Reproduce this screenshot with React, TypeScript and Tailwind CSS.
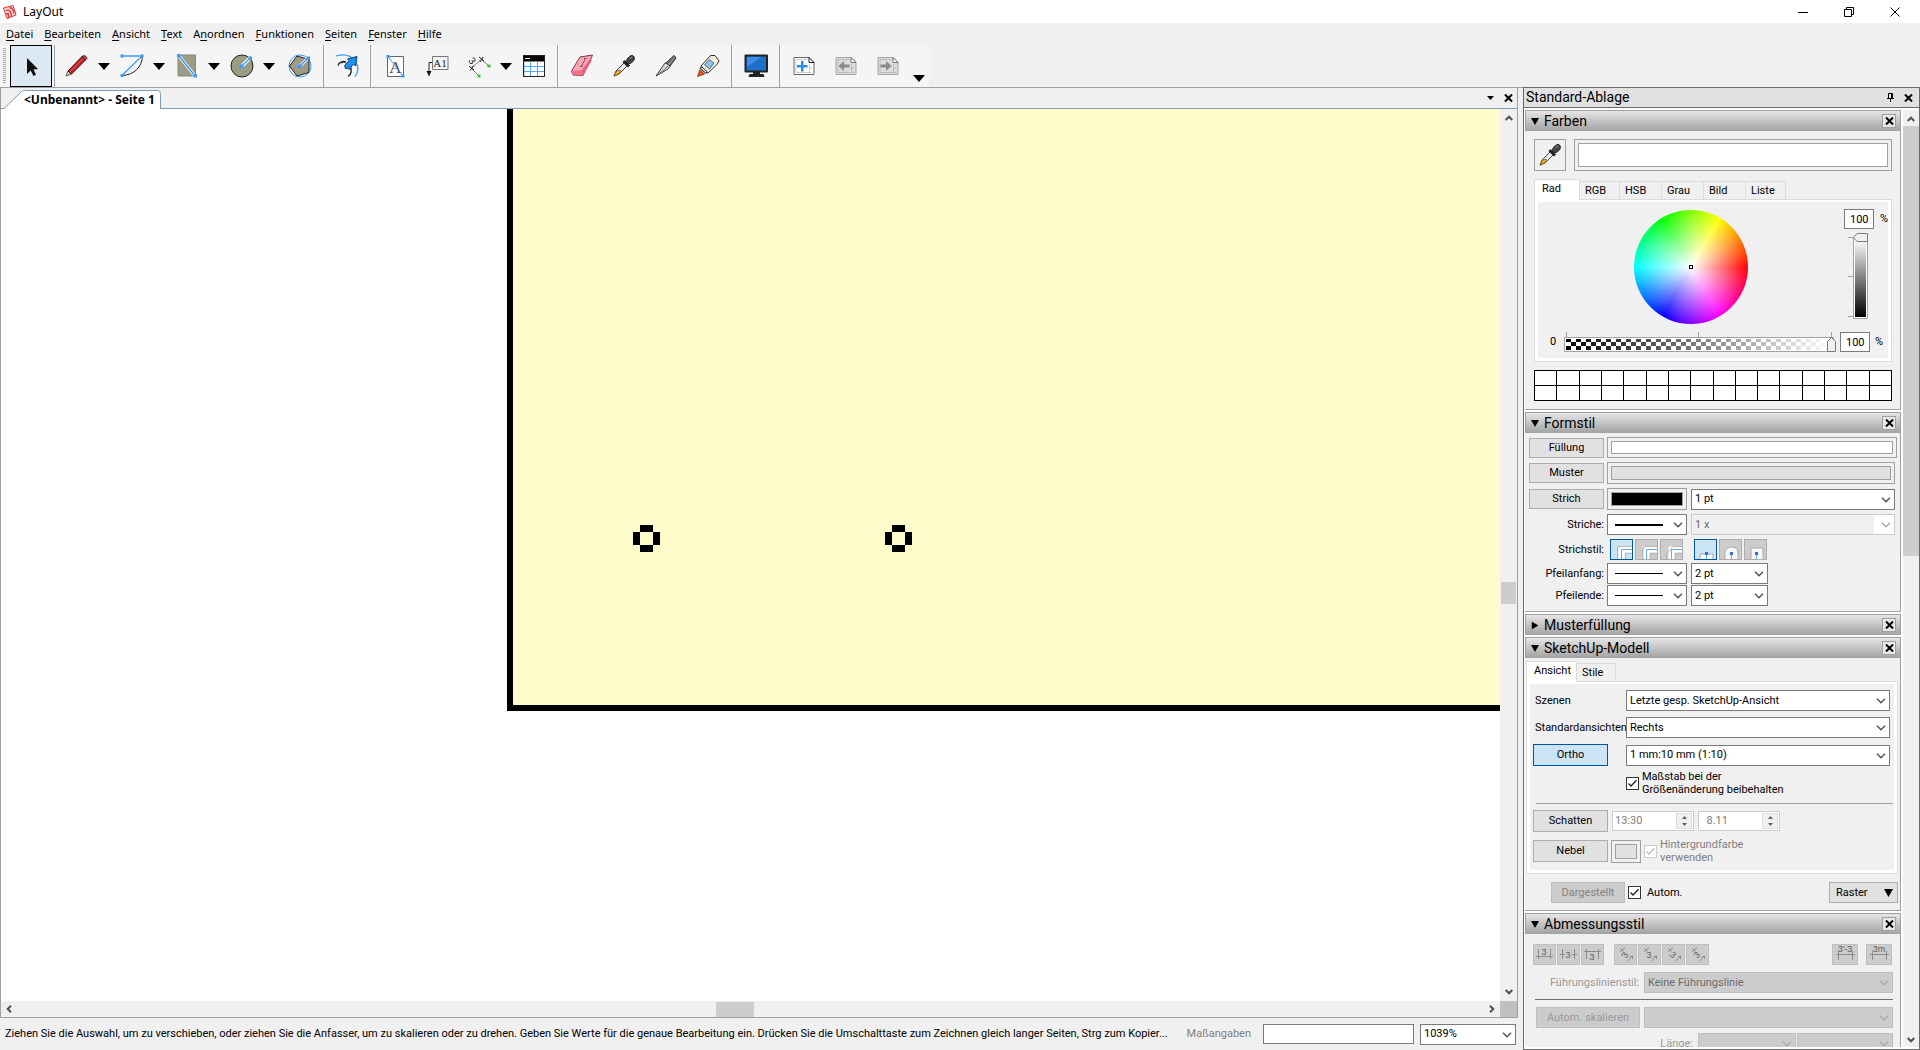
import { type ReactNode } from "react";
import clsx from "clsx";

const MENU = ["Datei", "Bearbeiten", "Ansicht", "Text", "Anordnen", "Funktionen", "Seiten", "Fenster", "Hilfe"];
const MENU_KEY = [0, 0, 0, 0, 1, 0, 0, 0, 0];

/* ---------- small ui parts ---------- */

const Chevron = ({ className = "" }: { className?: string }) => (
    <svg viewBox="0 0 10 6" className={clsx("w-2.5 h-1.5", className)} fill="none" stroke="currentColor">
        <path d="M1 .8 5 4.8 9 .8" strokeWidth="1.4" />
    </svg>
);

const ScrollArrow = ({ className = "" }: { className?: string }) => (
    <svg viewBox="0 0 8 6" className={clsx("w-2 h-1.5 text-[#505050]", className)} fill="none" stroke="currentColor">
        <path d="M.7 5 4 1.7 7.3 5" strokeWidth="2" />
    </svg>
);

const Triangle = ({ className = "w-3 h-[7px]" }: { className?: string }) => (
    <svg viewBox="0 0 12 7" preserveAspectRatio="none" className={clsx("shrink-0", className)} fill="currentColor">
        <path d="M0 0H12L6 7Z" />
    </svg>
);

const Cross = ({ className = "" }: { className?: string }) => (
    <svg viewBox="0 0 9 8" className={clsx("w-[9px] h-2", className)} fill="none" stroke="currentColor">
        <path d="M1 .5 8 7.5M8 .5 1 7.5" strokeWidth="2" />
    </svg>
);

type SelectProps = {
    label: string;
    value?: string;
    className?: string;
    variant?: "normal" | "disabled" | "gray";
    line?: string;
    id?: string;
};

const Select = ({ label, value = "", className = "", variant = "normal", line, id }: SelectProps) => (
    <div className={clsx("relative h-[21px]", className)}>
        <select
            id={id}
            aria-label={label}
            defaultValue={value}
            disabled={variant !== "normal"}
            className={clsx("appearance-none w-full h-full border pl-[3px] pr-5 opacity-100 outline-none", {
                "border-[#7a7a7a] bg-white text-black": variant === "normal",
                "border-[#cccccc] bg-[#f0f0f0] text-[#6d6d6d]": variant === "disabled",
                "border-[#bfbfbf] bg-[#cccccc] text-[#6d6d6d]": variant === "gray",
            })}
        >
            <option value={value}>{value}</option>
        </select>
        {variant === "disabled" && (
            <span className="absolute inset-y-px right-px w-5 bg-white pointer-events-none" />
        )}
        {line && <span className={clsx("absolute left-2 right-6 top-2.5 bg-black pointer-events-none", line)} />}
        <Chevron
            className={clsx(
                "absolute right-1 top-2 pointer-events-none",
                variant === "normal" ? "text-[#505050]" : "text-[#aaaaaa]"
            )}
        />
    </div>
);

const PanelButton = ({ children, className = "" }: { children: ReactNode; className?: string }) => (
    <button className={clsx("border border-[#adadad] bg-[#e1e1e1] text-center shrink-0", className)}>{children}</button>
);

const Well = ({ className = "", fill = "bg-white" }: { className?: string; fill?: string }) => (
    <div className={clsx("border border-[#a0a0a0] p-[3px]", className)}>
        <div className={clsx("h-full border border-[#a0a0a0]", fill)} />
    </div>
);

const Check = ({ id, disabled }: { id: string; disabled?: boolean }) => (
    <span className="relative size-[13px] shrink-0">
        <input
            id={id}
            type="checkbox"
            defaultChecked
            disabled={disabled}
            className={clsx("appearance-none block size-full border bg-white", disabled ? "border-[#cccccc]" : "border-[#333]")}
        />
        <svg
            viewBox="0 0 13 13"
            className={clsx("absolute inset-0 pointer-events-none", disabled ? "text-[#bbb]" : "text-[#222]")}
            fill="none"
            stroke="currentColor"
        >
            <path d="M2.5 6.5 5 9 10.5 3.3" strokeWidth="1.3" />
        </svg>
    </span>
);

type SectionProps = { title: string; open?: boolean; className?: string; children?: ReactNode };

const Section = ({ title, open = true, className = "", children }: SectionProps) => (
    <section className={clsx("border-r border-[#a0a0a0] shadow-[0_2px_0_#fff] mb-0.5 shrink-0", open && "border-b", className)}>
        <div className="h-[21px] border-t border-l border-[#a0a0a0] bg-linear-to-b from-[#e6e6e6] to-[#a2a2a2] flex items-center pl-[5px] pr-1">
            <Triangle className={clsx("w-2 h-[7px]", !open && "-rotate-90")} />
            <h2 className="ml-[5px] text-sm leading-[18px] pb-px flex-1">{title}</h2>
            <button aria-label={title + " schließen"} className="size-3.5 border border-[#a0a0a0] bg-[#e8e8e8] flex items-center justify-center">
                <Cross />
            </button>
        </div>
        {children}
    </section>
);

type TabsProps = { tabs: string[]; widths: string[]; children: ReactNode };

const Tabs = ({ tabs, widths, children }: TabsProps) => (
    <div>
        <div className="flex items-end relative h-[21px] -mb-px" role="tablist">
            {tabs.map((tab, i) => (
                <button
                    key={tab}
                    role="tab"
                    aria-selected={i === 0}
                    className={clsx("border-t border-r border-[#dcdcdc] text-left", widths[i], {
                        "h-[21px] bg-white border-l pl-[7px] pb-0.5": i === 0,
                        "h-[19px] border-b pl-[5px]": i !== 0,
                    })}
                >
                    {tab}
                </button>
            ))}
        </div>
        <div className="border border-[#dcdcdc] bg-white p-[3px] pt-0.5">
            <div className="bg-[#f0f0f0]">{children}</div>
        </div>
    </div>
);

/* ---------- toolbar ---------- */

const Icon = ({ children }: { children: ReactNode }) => (
    <svg viewBox="0 0 24 24" className="size-6" fill="none">
        {children}
    </svg>
);

const BLUE = "#3c9bf5";

const EyedropperIcon = () => (
    <Icon>
        <path d="M2 22 4 17 13 8 16 11 7 20Z" fill="#e8e8e8" stroke="#444" />
        <path d="M2 22 4 17.500 8 16 9 17.500 6.500 20Z" fill="#f5b020" stroke="#6b4a10" strokeWidth=".7" />
        <path d="M11.500 7 17 12.500" stroke="#222" strokeWidth="3" />
        <path d="M14 8C15 4 18 1.500 20 1.500S23 4 22 6 18 10 16 10Z" fill="#4a4646" stroke="#222" />
        <path d="M18 4.500 20 3" stroke="#999" />
    </Icon>
);

const icons: Record<string, ReactNode> = {
    Auswahl: (
        <Icon>
            <path d="M8 4V20L11.700 16.500 14.500 22 17 20.700 14.500 15.500 19 15Z" fill="#111" />
        </Icon>
    ),
    Linie: (
        <Icon>
            <path d="M1 22 3 17 6.500 20Z" fill="#e9d6a0" stroke="#333" strokeWidth=".8" />
            <path d="M3 17 17 2.500 20.500 6 6.500 20Z" fill="#c81e28" stroke="#3a1010" />
            <path d="M5 18 18.500 4" stroke="#f06068" />
            <path d="M17 2.500C19 .5 23 3 21.500 5L20.500 6Z" fill="#b06068" stroke="#3a1010" />
        </Icon>
    ),
    Bogen: (
        <Icon>
            <path d="M22.500 2C22 13 14 21 2.500 21.500" stroke="#222" />
            <path d="M2 2H22L2 21.500" stroke={BLUE} strokeWidth="1.300" />
            <path d="M.5.5h3v3h-3zM20.500.5h3v3h-3zM.5 20h3v3h-3z" fill={BLUE} />
        </Icon>
    ),
    Rechteck: (
        <Icon>
            <path d="M3 1H20.500V22H3Z" fill="#9e9b84" stroke="#8a8772" />
            <path d="M4 2 20 22" stroke="#fff" strokeWidth="3" />
            <path d="M4 2 20 22" stroke={BLUE} strokeWidth="1.500" />
            <path d="M2 0h3.500v3.500H2zM18.500 20H22v3.500h-3.500z" fill={BLUE} />
        </Icon>
    ),
    Kreis: (
        <Icon>
            <circle cx="12" cy="12" r="11" fill="#9e9b84" stroke="#222" />
            <path d="M12 12 20 4" stroke="#fff" strokeWidth="3.500" />
            <path d="M12 12 20 4" stroke={BLUE} strokeWidth="1.500" />
            <path d="M10 10.500h3.500V14H10zM18.500 2.500H22V6h-3.500z" fill={BLUE} />
        </Icon>
    ),
    Polygon: (
        <Icon>
            <circle cx="12" cy="12" r="11" stroke={BLUE} />
            <path d="M9 2 21 5.500V18.500L9 22 1.500 12Z" fill="#9e9b84" stroke="#222" />
            <path d="M12 12 20 4" stroke="#fff" strokeWidth="3" />
            <path d="M12 12 20 4" stroke={BLUE} strokeWidth="1.500" />
            <path d="M10 10.500h3.500V14H10zM18.500 2.500H22V6h-3.500z" fill={BLUE} />
        </Icon>
    ),
    Versatz: (
        <Icon>
            <path d="M1 2C9-.5 16 1.500 20 7 24 12.500 23.500 18 20 22.500" stroke={BLUE} strokeWidth="1.300" />
            <path d="M3 11.500C4 8 8 6.500 11 8M15 12.500C17.500 16 16 21 13 22.500" stroke="#222" strokeWidth="1.300" />
            <path d="M6 9.500C8 7.500 11 8.500 12 10" stroke="#222" />
            <path d="M9.500 12 14 6.500 12.500 5 22 2.500 20.500 12 18.500 10 14 15.500 12.500 14 11 15Z" fill="#1e90f0" stroke="#0a3f73" />
        </Icon>
    ),
    Text: (
        <Icon>
            <path d="M4.500 2.500H20.500V22.500H4.500Z" fill="#fff" stroke="#666" />
            <text x="12.500" y="19" fontSize="17" textAnchor="middle" fill="#444" fontFamily="Liberation Serif, serif">A</text>
            <path d="M5 2.500 20 22" stroke={BLUE} />
            <path d="M3.500 1h3v3h-3zM18.500 20.500h3v3h-3z" fill={BLUE} />
        </Icon>
    ),
    Beschriftung: (
        <Icon>
            <path d="M7.500 2.500H23V15.500H7.500Z" fill="#f4f4f4" stroke="#777" />
            <text x="15" y="13" fontSize="11" textAnchor="middle" fill="#222" fontFamily="Liberation Serif, serif">A1</text>
            <path d="M7 8.500H4V18" stroke="#222" />
            <path d="M1.500 17H6.500L4 22.500Z" fill="#111" />
        </Icon>
    ),
    Bemaßung: (
        <Icon>
            <path d="M5 14 14.500 5" stroke="#555" strokeDasharray="2 1" />
            <path d="M14 5 22 12M4 14 12 22" stroke="#777" />
            <path d="M12 3 17 7M16 3 13 8M2 12 7 16M6.500 11.500 3 16.500" stroke="#222" />
            <text x="2" y="10" fontSize="10" fill="#222" transform="rotate(50 5 7)" fontFamily="Liberation Sans, sans-serif">3</text>
            <path d="M20.500 10.500h3v3h-3zM10.500 20.500h3v3h-3z" fill="#3fc43f" />
        </Icon>
    ),
    Tabelle: (
        <Icon>
            <path d="M1.500 1.500H22.500V22.500H1.500Z" fill="#fff" stroke="#222" />
            <path d="M2 8V22.500M8.500 8V22M15.500 8V22M2 12.500H22M2 17.500H22" stroke="#5aa7f5" />
            <path d="M1 1H23V7.500H1Z" fill="#000" />
            <path d="M3 4.500H8" stroke="#fff" />
            <path d="M1.500 1.500H22.500V22.500H1.500Z" stroke="#222" />
        </Icon>
    ),
    Radiergummi: (
        <Icon>
            <path d="M1.500 17 10 3 22.500 1 13 21.500 3 21Z" fill="#f7a8b8" stroke="#7a3a48" />
            <path d="M1.500 17 12 16 13 21.500 3 21Z" fill="#f56f88" />
            <path d="M12 16 22.500 1.500 21 8 13 21.500Z" fill="#e8607c" />
            <path d="M11.500 12 15.500 4.500M10 12.500H13M14 4.500H16.500" stroke="#a04458" />
        </Icon>
    ),
    Pipette: <EyedropperIcon />,
    Teilen: (
        <Icon>
            <path d="M2 22 11 9 14 8 17 11 14 15Z" fill="#dcdcdc" stroke="#333" />
            <path d="M12 9 20 1.500 22 4 16 12Z" fill="#888" stroke="#222" />
            <path d="M5 20 14 12M14 9 19 4" stroke="#666" />
        </Icon>
    ),
    Verbinden: (
        <Icon>
            <path d="M5 12 14.500 1.500 19 1.500 23 7 21 10.500 12 19 7 17Z" fill="#f2eedf" stroke="#333" />
            <path d="M8.500 11 13 5.500 18 9 13.500 15Z" fill="#8cc4ec" stroke="#456" strokeWidth=".8" />
            <path d="M4 14 6 13 11 17.500 10 19.500Z" fill="#ddd" stroke="#333" />
            <path d="M1.500 22.500 4 15.500 8.500 20Z" fill="#e8501e" stroke="#8a2a0a" strokeWidth=".8" />
        </Icon>
    ),
    Präsentation: (
        <Icon>
            <path d="M1.500 1.500H23V17.500H1.500Z" fill="#1f6fc8" stroke="#222" strokeWidth="2" strokeLinejoin="round" />
            <path d="M3 3H17L3 13Z" fill="#3a8ce8" />
            <path d="M9 18H16V20H19.500L20.500 23H4.500L5.500 20H9Z" fill="#222" />
        </Icon>
    ),
};

const PageIcon = ({ muted, d }: { muted?: boolean; d: string }) => (
    <Icon>
        <path
            d="M2 3.500H17L22 8.500V20.500H2Z"
            fill={muted ? "#dcdcdc" : "#fff"}
            stroke={muted ? "#a5a5a5" : "#666"}
        />
        <path d="M4 5.500H15.500M4 18.500H20M4 5.500V18.500M17.500 10V18.500M17.500 14H20" stroke={muted ? "#bbb" : "#ccc"} />
        <path d="M17 3.500V8.500H22Z" fill="#fff" stroke={muted ? "#777" : "#222"} />
        <path d={d} fill={muted ? "#8a8a8a" : "#2a8cf0"} />
    </Icon>
);

icons["Seite hinzufügen"] = <PageIcon d="M9 7H11.500V11H15.500V13.500H11.500V17.500H9V13.500H5V11H9Z" />;
icons["Vorherige Seite"] = <PageIcon muted d="M4.500 12 10 7V10.500H15.500V13.500H10V17Z" />;
icons["Nächste Seite"] = <PageIcon muted d="M15.500 12 10 7V10.500H4.500V13.500H10V17Z" />;

const Tool = ({ name, active, menu }: { name: string; active?: boolean; menu?: boolean }) => (
    <>
        <button
            title={name}
            className={clsx("size-[42px] flex items-center justify-center shrink-0", active && "border border-black bg-[#dce8f3]")}
        >
            {icons[name]}
        </button>
        {menu && (
            <button aria-label={name + " Optionen"} className="w-[13px] h-[42px] flex items-center justify-start">
                <Triangle />
            </button>
        )}
    </>
);

const Separator = ({ className = "mr-[3px]" }: { className?: string }) => (
    <div className={clsx("w-px bg-[#a0a0a0] ml-0.5 shrink-0", className)} />
);

const Toolbar = () => (
    <div className="flex h-[43px] border-b border-[#a0a0a0] shrink-0">
        <div className="flex bg-[#f5f5f5]">
            <div className="w-[3px] ml-[3px] mr-1 my-[3px] bg-[repeating-linear-gradient(#a8a8a8_0_1px,transparent_1px_2px)]" />
            <Tool name="Auswahl" active />
            <Separator className="mr-px" />
            <Tool name="Linie" menu />
            <Tool name="Bogen" menu />
            <Tool name="Rechteck" menu />
            <Tool name="Kreis" menu />
            <div className="w-[3px]" />
            <Tool name="Polygon" />
            <Separator className="mr-0.5" />
            <Tool name="Versatz" />
            <Separator />
            <Tool name="Text" />
            <Tool name="Beschriftung" />
            <Tool name="Bemaßung" menu />
            <Tool name="Tabelle" />
            <Separator />
            <Tool name="Radiergummi" />
            <Tool name="Pipette" />
            <Tool name="Teilen" />
            <Tool name="Verbinden" />
            <Separator />
            <Tool name="Präsentation" />
            <Separator />
            <Tool name="Seite hinzufügen" />
            <Tool name="Vorherige Seite" />
            <Tool name="Nächste Seite" />
            <button aria-label="Weitere Werkzeuge" className="w-5 flex items-end justify-center pb-[5px]">
                <Triangle />
            </button>
        </div>
    </div>
);

/* ---------- document ---------- */

const Handle = ({ className }: { className: string }) => (
    <svg viewBox="0 0 27 27" className={clsx("absolute size-[27px]", className)} shapeRendering="crispEdges">
        <path d="M7 0H20V7H7ZM0 7H7V20H0ZM20 7H27V20H20ZM7 20H20V27H7Z" />
    </svg>
);

const Document = () => (
    <main className="flex-1 min-w-0 flex flex-col border-x border-b border-[#a0a0a0]">
        <div className="h-[21px] flex shrink-0">
            <div className="w-[3px] border-b border-[#7f9db9]" />
            <button className="relative h-[21px] w-[157px] text-left pl-5 pt-0.5 font-['Noto_Sans',sans-serif] text-xs leading-4 font-bold whitespace-nowrap">
                <svg viewBox="0 0 157 21" className="absolute inset-0" fill="none">
                    <path d="M0 20.500 17 4Q18.500 2.500 21 2.500H153.500Q156.500 2.500 156.500 5.500V21H0Z" fill="#fff" />
                    <path d="M0 20.500 17 4Q18.500 2.500 21 2.500H153.500Q156.500 2.500 156.500 5.500V21" stroke="#7f9db9" />
                </svg>
                <span className="relative">&lt;Unbenannt&gt; - Seite 1</span>
            </button>
            <div className="flex-1 border-b border-[#7f9db9] flex items-center justify-end gap-2.5 pr-1">
                <button aria-label="Dokumentliste">
                    <Triangle className="w-[7px] h-1" />
                </button>
                <button aria-label="Dokument schließen">
                    <Cross />
                </button>
            </div>
        </div>

        <div className="flex-1 min-h-0 flex">
            <div className="relative flex-1 bg-white overflow-hidden">
                <div className="absolute left-[506px] right-0 top-0 h-[602px] bg-[#fefbcb] border-l-[6px] border-b-[6px] border-black" />
                <Handle className="left-[632px] top-[416px]" />
                <Handle className="left-[884px] top-[416px]" />
            </div>
            <div className="w-[17px] bg-[#f0f0f0] flex flex-col items-center py-1.5">
                <ScrollArrow />
                <div className="flex-[461]" />
                <div className="w-[15px] h-[22px] bg-[#cdcdcd]" />
                <div className="flex-[385]" />
                <ScrollArrow className="rotate-180" />
            </div>
        </div>

        <div className="h-4 shrink-0 flex">
            <div className="flex-1 flex items-center bg-[#f0f0f0] px-1">
                <ScrollArrow className="-rotate-90" />
                <div className="flex-[703]" />
                <div className="h-[15px] w-[38px] bg-[#cdcdcd]" />
                <div className="flex-[734]" />
                <ScrollArrow className="rotate-90" />
            </div>
            <div className="w-[17px] bg-[#c0c0c0]" />
        </div>
    </main>
);

const StatusBar = () => (
    <footer className="h-8 shrink-0 flex items-center pl-[5px] pr-0.5">
        <p className="flex-1 whitespace-nowrap">
            Ziehen Sie die Auswahl, um zu verschieben, oder ziehen Sie die Anfasser, um zu skalieren oder zu drehen. Geben Sie
            Werte für die genaue Bearbeitung ein. Drücken Sie die Umschalttaste zum Zeichnen gleich langer Seiten, Strg zum
            Kopier...
        </p>
        <label htmlFor="measure" className="text-[#808080] mr-3">
            Maßangaben
        </label>
        <input id="measure" className="w-[151px] h-5 border border-[#7a7a7a] bg-white mr-1.5 px-1" />
        <Select label="Zoom" value="1039%" className="w-24" />
    </footer>
);

/* ---------- tray sections ---------- */

const Colors = () => (
    <Section title="Farben">
        <div className="pl-[9px] pr-2 pt-2 pb-2">
            <div className="flex gap-2">
                <button aria-label="Farbe aufnehmen" className="size-8 border border-[#a0a0a0] flex items-center justify-center">
                    <EyedropperIcon />
                </button>
                <Well className="flex-1 h-8" />
            </div>
            <div className="mt-2">
                <Tabs
                    tabs={["Rad", "RGB", "HSB", "Grau", "Bild", "Liste"]}
                    widths={["w-[46px]", "w-10", "w-[42px]", "w-[42px]", "w-[42px]", "w-10"]}
                >
                    <div className="h-[156px] pl-3 pt-[7px]">
                        <div className="flex h-[122px]">
                            <div className="flex-1 flex justify-center pt-px pr-3">
                                <div className="relative size-[114px] rounded-full bg-[radial-gradient(circle_closest-side,#fff,transparent),conic-gradient(from_90deg,#f00,#f0f,#00f,#0ff,#0f0,#ff0,#f00)]">
                                    <span className="absolute left-[55px] top-[55px] size-1 border border-black bg-white" />
                                </div>
                            </div>
                            <div className="w-11">
                                <div className="flex items-center gap-1.5">
                                    <input aria-label="Helligkeit" defaultValue="100" className="w-[30px] h-5 border border-[#7a7a7a] bg-white pl-[5px]" />
                                    <span>%</span>
                                </div>
                                <svg viewBox="0 0 20 88" className="w-5 h-[88px] mt-1 ml-1" fill="none">
                                    <defs>
                                        <linearGradient id="value" x1="0" x2="0" y1="0" y2="1">
                                            <stop stopColor="#fff" />
                                            <stop offset="1" />
                                        </linearGradient>
                                    </defs>
                                    <path d="M0 4.500H6M0 43.500H6M0 83.500H6" stroke="#a0a0a0" />
                                    <path d="M5.500 4.500H19.500V85.500H5.500Z" fill="#fff" stroke="#a0a0a0" />
                                    <path d="M7 6H18V84H7Z" fill="url(#value)" />
                                    <path d="M5.500 4.500 9 .5H19.500V8.500H9Z" fill="#f0f0f0" stroke="#7a7a7a" />
                                </svg>
                            </div>
                        </div>
                        <div className="flex items-center">
                            <span className="w-[14px]">0</span>
                            <svg viewBox="0 0 272 22" className="w-[272px] h-[22px] mr-1 shrink-0" fill="none">
                                <defs>
                                    <pattern id="checker" width="10" height="8" patternUnits="userSpaceOnUse" x="2" y="7">
                                        <path d="M0 0H5V4H0ZM5 4H10V8H5Z" fill="#000" />
                                    </pattern>
                                    <linearGradient id="fade">
                                        <stop stopColor="#fff" stopOpacity="0" />
                                        <stop offset="1" stopColor="#fff" />
                                    </linearGradient>
                                </defs>
                                <path d="M2.500 1V6M134.500 1V6M267.500 1V6" stroke="#a0a0a0" />
                                <path d="M.5 6.500H269.500V20.500H.5Z" fill="#fff" stroke="#a0a0a0" />
                                <path d="M2 8H268V19H2Z" fill="url(#checker)" />
                                <path d="M2 8H268V19H2Z" fill="url(#fade)" />
                                <path d="M263.500 20.500V10.500L267.500 6.500 271.500 10.500V20.500Z" fill="#f0f0f0" stroke="#7a7a7a" />
                            </svg>
                            <input aria-label="Deckkraft" defaultValue="100" className="w-[30px] h-5 shrink-0 border border-[#7a7a7a] bg-white pl-[5px]" />
                            <span className="ml-[5px]">%</span>
                        </div>
                    </div>
                </Tabs>
            </div>
            <div className="mt-2 grid grid-cols-16 border-l border-t border-black">
                {Array.from({ length: 32 }, (_, i) => (
                    <button key={i} aria-label={"Farbfeld " + (i + 1)} className="h-[15px] border-r border-b border-black bg-white" />
                ))}
            </div>
        </div>
    </Section>
);

const STYLE_ICONS = [
    "M6.500 19V6.500H21M14.500 19V13.500H21",
    "M6.500 19V11Q7 6.500 12 6.500H21M14.500 19V13.500H21",
    "M5.500 19V14L12 6.500H21M14.500 19V13.500H21",
    "M5 19V14H18V19",
    "M5 19V12Q6 7 11.500 7 17 7 18 12V19",
    "M6 19V8H18V19",
];

const StrokeStyle = ({ index }: { index: number }) => {
    const active = index === 0 || index === 3;
    return (
        <button
            aria-label={"Strichstil " + (index + 1)}
            className={clsx("w-[23px] h-[21px] border", active ? "border-[#0054a0] bg-[#cce4f7]" : "border-[#adadad] bg-[#cccccc]")}
        >
            <svg viewBox="0 0 21 19" className="block w-[21px] h-[19px]" fill="none">
                {index < 3 ? (
                    <>
                        <path d="M10.500 19V9.500H21" stroke="#fff" strokeWidth="6" />
                        <path d={STYLE_ICONS[index]} stroke="#b4b4b4" />
                        <path d="M10.500 19V9.500H21" stroke="#6aa5f0" />
                    </>
                ) : (
                    <>
                        <path d={STYLE_ICONS[index]} stroke="#a8a8a8" fill="#f8f8f8" />
                        <path d="M11.500 13V19" stroke="#6aa5f0" />
                        <path d="M10 12h3v3h-3z" fill="#2f6fe0" />
                    </>
                )}
            </svg>
        </button>
    );
};

const ShapeStyle = () => (
    <Section title="Formstil">
        <div className="pl-1 pr-1 pt-1 pb-[5px] flex flex-col gap-1">
            <div className="flex items-center gap-[3px] -mr-px">
                <PanelButton className="w-[75px] h-5">Füllung</PanelButton>
                <Well className="flex-1 h-[21px]" />
            </div>
            <div className="flex items-center gap-[3px] mr-px">
                <PanelButton className="w-[75px] h-5">Muster</PanelButton>
                <Well className="flex-1 h-[22px]" fill="bg-[#e1e1e1]" />
            </div>
            <div className="flex items-center gap-[3px] mr-px">
                <PanelButton className="w-[75px] h-5">Strich</PanelButton>
                <Well className="w-20 h-[22px]" fill="bg-black" />
                <Select label="Strichstärke" value="1 pt" className="flex-1 ml-px" />
            </div>
            <div className="flex items-center gap-[3px] mr-px">
                <label htmlFor="dashes" className="w-[75px] text-right">Striche:</label>
                <Select id="dashes" label="Striche" line="h-0.5" className="w-20" />
                <Select label="Strichskalierung" value="1 x" variant="disabled" className="flex-1 ml-px" />
            </div>
            <div className="flex items-center gap-0.5">
                <span className="w-[75px] text-right mr-1">Strichstil:</span>
                <StrokeStyle index={0} />
                <StrokeStyle index={1} />
                <StrokeStyle index={2} />
                <span className="w-[7px]" />
                <StrokeStyle index={3} />
                <StrokeStyle index={4} />
                <StrokeStyle index={5} />
            </div>
            <div className="flex flex-col gap-px -mt-px">
                {["Pfeilanfang", "Pfeilende"].map((name) => (
                    <div key={name} className="flex items-center gap-[3px]">
                        <label htmlFor={name} className="w-[75px] text-right">{name}:</label>
                        <Select id={name} label={name} line="h-px" className="w-20" />
                        <Select label={name + " Größe"} value="2 pt" className="w-[77px] ml-px" />
                    </div>
                ))}
            </div>
        </div>
    </Section>
);

const Spinner = ({ value, label }: { value: string; label: string }) => (
    <div className="w-[82px] h-5 border border-[#cccccc] bg-white flex text-[#808080]">
        <input aria-label={label} disabled defaultValue={value} className="min-w-0 flex-1 pl-0.5" />
        <span className="w-4 mr-px my-px bg-[#f0f0f0] border border-[#ddd] flex flex-col items-center justify-center gap-1 text-[#606060]">
            <Triangle className="w-[5px] h-[3px] rotate-180" />
            <Triangle className="w-[5px] h-[3px]" />
        </span>
    </div>
);

const Model = () => (
    <Section title="SketchUp-Modell">
        <div className="pl-px pr-0.5 pt-[3px] pb-[7px]">
            <Tabs tabs={["Ansicht", "Stile"]} widths={["w-[51px]", "w-[39px]"]}>
                <div className="pl-[3px] pr-1 pt-1.5 pb-1.5">
                    <div className="grid grid-cols-[93px_1fr] gap-y-1.5 items-center">
                        <label htmlFor="scenes" className="pl-0.5">Szenen</label>
                        <Select id="scenes" label="Szenen" value="Letzte gesp. SketchUp-Ansicht" />
                        <label htmlFor="views" className="pl-0.5">Standardansichten</label>
                        <Select id="views" label="Standardansichten" value="Rechts" />
                        <button className="w-[75px] h-[22px] border border-[#0054a0] bg-[#cce4f7]">Ortho</button>
                        <Select label="Maßstab" value="1 mm:10 mm (1:10)" />
                        <div className="col-start-2 flex items-center gap-[3px] -mt-0.5">
                            <Check id="keep" />
                            <label htmlFor="keep" className="leading-[13px]">
                                Maßstab bei der
                                <br />
                                Größenänderung beibehalten
                            </label>
                        </div>
                    </div>
                    <div className="border-t border-[#a0a0a0] mt-[7px] ml-[3px] -mr-[3px]" />
                    <div className="flex items-center mt-1.5 gap-1">
                        <PanelButton className="w-[75px] h-[22px]">Schatten</PanelButton>
                        <Spinner label="Uhrzeit" value="13:30" />
                        <Spinner label="Datum" value="  8.11" />
                    </div>
                    <div className="flex items-center mt-1.5 gap-[3px]">
                        <PanelButton className="w-[75px] h-[22px]">Nebel</PanelButton>
                        <Well className="w-[30px] h-[23px]" fill="bg-[#e1e1e1]" />
                        <Check id="background" disabled />
                        <label htmlFor="background" className="leading-[13px] text-[#808080]">
                            Hintergrundfarbe
                            <br />
                            verwenden
                        </label>
                    </div>
                </div>
            </Tabs>
            <div className="flex items-center mt-2 pl-[25px]">
                <button disabled className="w-[74px] h-[21px] border border-[#bfbfbf] bg-[#cccccc] text-[#838383] mr-[3px]">
                    Dargestellt
                </button>
                <Check id="auto" />
                <label htmlFor="auto" className="ml-1.5 flex-1">Autom.</label>
                <PanelButton className="w-[69px] h-[21px] flex items-center justify-between pl-1.5 pr-1">
                    Raster
                    <Triangle className="w-[9px] h-2" />
                </PanelButton>
            </div>
        </div>
    </Section>
);

type DimProps = { label: string; text: string; line: string; rotate?: number; className?: string; x?: number; y?: number };

const DimButton = ({ label, text, line, rotate = 0, className = "w-[23px]", x = 10, y = 13 }: DimProps) => (
    <button disabled aria-label={label} className={clsx("h-[21px] border border-[#bfbfbf] bg-[#cccccc]", className)}>
        <svg viewBox="0 0 21 19" className="block mx-auto w-[21px] h-[19px]" fill="none">
            <path d={line} stroke="#8c8c8c" />
            <text
                x={x}
                y={y}
                fontSize="9"
                fill="#5d5d5d"
                textAnchor="middle"
                fontFamily="Liberation Sans, sans-serif"
                transform={`rotate(${rotate} 10 10)`}
            >
                {text}
            </text>
        </svg>
    </button>
);

const SLANTED = "M5 7 10 2.500M5.500 3.500 8.500 6.500M12 16.500 18 10.500M15 11.500H17.500V14";

const Dimensions = () => (
    <Section title="Abmessungsstil">
        <div className="pl-2 pr-[7px] pt-2.5 text-[#9a9a9a]">
            <div className="flex gap-px">
                <DimButton label="Text oben" text="3" line="M4.500 4V14M16.500 4V14M2 11.500H19" y={10} />
                <DimButton label="Text mittig" text="3" line="M4.500 4V14M16.500 4V14M2 9.500H7M14 9.500H19" />
                <DimButton label="Text unten" text="3" line="M4.500 4V14M16.500 4V14M2 6.500H19" y={15} />
                <span className="w-2" />
                <DimButton label="Text horizontal" text="3" line={SLANTED} rotate={-60} />
                <DimButton label="Text vertikal" text="3" line={SLANTED} />
                <DimButton label="Text parallel" text="3" line={SLANTED} rotate={45} />
                <DimButton label="Text senkrecht" text="3" line={SLANTED} rotate={-45} />
                <span className="flex-1" />
                <DimButton label="Trennzeichen" text="3'-3" line="M3.500 6V15M17.500 6V15M1 9.500H20" y={7} className="w-[26px]" />
                <span className="w-1.5" />
                <DimButton label="Einheiten" text="3m" line="M3.500 6V15M17.500 6V15M1 9.500H20" y={7} className="w-[26px] mr-px" />
            </div>
            <div className="flex items-center mt-[7px]">
                <label htmlFor="leader" className="w-[106px] text-right mr-[5px]">Führungslinienstil:</label>
                <Select id="leader" label="Führungslinienstil" value="Keine Führungslinie" variant="gray" className="flex-1" />
            </div>
            <div className="border-t border-[#707070] mt-1.5 ml-0.5" />
            <div className="flex items-center mt-[7px] ml-[3px] gap-1">
                <button disabled className="w-[104px] h-[21px] border border-[#bfbfbf] bg-[#cccccc]">Autom. skalieren</button>
                <Select label="Skalierung" variant="gray" className="flex-1" />
            </div>
            <div className="flex items-center mt-[5px]">
                <label htmlFor="length" className="w-[160px] text-right mr-[5px]">Länge:</label>
                <Select id="length" label="Länge" variant="gray" className="w-[98px] mr-px" />
                <Select label="Genauigkeit" variant="gray" className="flex-1" />
            </div>
        </div>
    </Section>
);

const Tray = () => (
    <aside className="w-[397px] shrink-0 -mt-px flex flex-col border border-[#696969] bg-[#f0f0f0]">
        <div className="h-5 shrink-0 bg-[#e1e1e1] border-b border-[#696969] flex items-center pl-0.5 pr-1.5">
            <h1 className="flex-1 text-sm leading-[18px] pb-px">Standard-Ablage</h1>
            <button aria-label="Anheften" className="mr-2.5">
                <svg viewBox="0 0 7 9" className="w-[7px] h-[9px]" fill="none" stroke="#000">
                    <path d="M1.500 5V.5H5.500V5M4.500 .5V5M0 5.500H7M3.500 5.500V9" />
                </svg>
            </button>
            <button aria-label="Ablage schließen">
                <Cross />
            </button>
        </div>
        <div className="flex-1 min-h-0 flex border-2 border-r-0 border-white border-l-[1px]">
            <div className="flex-1 min-w-0 overflow-hidden flex flex-col">
                <Colors />
                <ShapeStyle />
                <Section title="Musterfüllung" open={false} />
                <Model />
                <Dimensions />
            </div>
            <div className="w-[18px] border-l-2 border-white flex flex-col items-center pt-1.5 pb-1">
                <ScrollArrow />
                <div className="w-full flex-[430] mt-1 bg-[#cdcdcd]" />
                <div className="flex-[480]" />
                <ScrollArrow className="rotate-180" />
            </div>
        </div>
    </aside>
);

const App = () => {
    return (
        <div className="h-screen flex flex-col overflow-hidden bg-[#f0f0f0] text-black font-[Roboto,sans-serif] text-[11px] leading-4">
            <header className="shrink-0 font-['Noto_Sans',sans-serif]">
                <div className="h-[23px] bg-white flex items-center pl-[3px] pr-5">
                    <svg viewBox="0 0 14 14" className="size-3.5" fill="none" stroke="#e03030">
                        <path d="M.5 3 10 .5 13 10 4 13.500Z" fill="#fbd5d5" />
                        <path d="M3 5.500Q7 4 8 8.500L8.500 12M2.500 9.500 5 8.500 6 13M6.500 2.500Q10.500 3 11 8.500" strokeWidth="1.300" />
                    </svg>
                    <span className="ml-1.5 text-xs">LayOut</span>
                    <div className="flex-1" />
                    <div className="flex items-center gap-9">
                        <button aria-label="Minimieren">
                            <svg viewBox="0 0 10 10" className="size-2.5" stroke="#000"><path d="M0 5.500H10" /></svg>
                        </button>
                        <button aria-label="Wiederherstellen">
                            <svg viewBox="0 0 10 10" className="size-2.5" stroke="#000" fill="none"><path d="M.5 2.500H7.500V9.500H.5ZM2.500 2.500V.5H9.500V7.500H7.500" /></svg>
                        </button>
                        <button aria-label="Schließen">
                            <svg viewBox="0 0 10 10" className="size-2.5" stroke="#000"><path d="M.5.5 9.500 9.500M9.500.5.5 9.500" /></svg>
                        </button>
                    </div>
                </div>
                <nav className="h-[22px] flex items-center gap-[11px] pl-1.5">
                    {MENU.map((item, i) => (
                        <button key={item}>
                            {item.slice(0, MENU_KEY[i])}
                            <u className="underline-offset-2">{item[MENU_KEY[i]]}</u>
                            {item.slice(MENU_KEY[i] + 1)}
                        </button>
                    ))}
                </nav>
            </header>
            <div className="flex-1 min-h-0 flex flex-col">
                <Toolbar />
                <div className="flex-1 min-h-0 flex">
                    <div className="flex-1 min-w-0 flex flex-col">
                        <Document />
                        <StatusBar />
                    </div>
                    <div className="w-[5px]" />
                    <Tray />
                </div>
            </div>
        </div>
    );
};

export default App;
